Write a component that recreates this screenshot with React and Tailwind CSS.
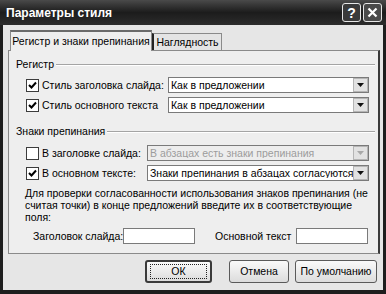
import React from 'react';

const Check = ({ checked }) => (
  <span className="w-[13px] h-[13px] border border-[#3c3c3c] bg-white flex items-center justify-center shrink-0">
    {checked && (
      <svg width="9" height="9" viewBox="0 0 9 9">
        <path d="M1 4 L3.5 6.5 L8 1.5" stroke="#000" strokeWidth="2" fill="none" />
      </svg>
    )}
  </span>
);

const Combo = ({ text, disabled, width }) => (
  <div
    className={`h-[16px] border border-[#7a7a7a] flex items-center ${width} ${
      disabled ? 'bg-[#ededed] text-[#9c9c9c]' : 'bg-white text-black'
    }`}
  >
    <span className="flex-1 pl-[2px] overflow-hidden">{text}</span>
    <span className="w-[15px] h-[14px] bg-[#e2e2e2] border border-[#b5b5b5] flex items-center justify-center">
      <svg width="7" height="4" viewBox="0 0 7 4">
        <path d="M0 0h7L3.5 4z" fill={disabled ? '#a8a8a8' : '#111'} />
      </svg>
    </span>
  </div>
);

const GroupHeader = ({ label }) => (
  <div className="flex items-center h-[13px]">
    <span>{label}</span>
    <div className="flex-1 ml-[2px] border-t border-[#a4a4a4] border-b border-b-white" />
  </div>
);

const Button = ({ children, width, focused }) => (
  <div
    className={`h-[23px] ${width} rounded-[3px] bg-gradient-to-b from-[#fafafa] to-[#dcdcdc] flex items-center justify-center ${
      focused ? 'border-2 border-[#3a3a3a]' : 'border border-[#5a5a5a]'
    }`}
  >
    {focused ? (
      <span className="border border-dotted border-[#222] w-[calc(100%-6px)] h-[15px] flex items-center justify-center">
        {children}
      </span>
    ) : (
      children
    )}
  </div>
);

const App = () => {
  return (
    <div className="w-[386px] h-[294px] bg-[#1e1e1e] flex flex-col font-['Liberation_Sans',Arial,sans-serif] text-[10.5px] text-black leading-none whitespace-nowrap">
      {/* title bar */}
      <div className="h-[25px] flex items-center justify-between pl-[6px] pr-[4px] bg-gradient-to-b from-[#4a4a4a] via-[#1c1c1c] to-[#2c2c2c]">
        <span className="text-white font-bold text-[12px]">Параметры стиля</span>
        <div className="flex gap-[2px]">
          <div className="w-[19px] h-[19px] rounded-[3px] border border-[#e6e6e6] bg-[#3a3a3a] flex items-center justify-center text-white font-bold text-[14px]">
            ?
          </div>
          <div className="w-[19px] h-[19px] rounded-[3px] border border-[#e6e6e6] bg-[#4a4a4a] flex items-center justify-center">
            <svg width="11" height="11" viewBox="0 0 11 11">
              <path d="M1.5 1.5 L9.5 9.5 M9.5 1.5 L1.5 9.5" stroke="#fff" strokeWidth="2.2" />
            </svg>
          </div>
        </div>
      </div>

      {/* body */}
      <div className="flex-1 mx-[3px] mb-[4px] bg-[#e6e6e6] flex flex-col">
        {/* tabs */}
        <div className="flex items-end h-[25px] pt-[4px] pl-[7px]">
          <div className="h-[21px] w-[142px] bg-[#eeeeee] border border-b-0 border-[#8a8a8a] border-t-2 border-t-[#6a6a6a] flex items-center justify-center relative top-[1px] z-10">
            Регистр и знаки препинания
          </div>
          <div className="h-[17px] w-[70px] bg-[#e4e4e4] border border-b-0 border-[#8a8a8a] border-l-2 border-l-[#222] flex items-center justify-center">
            Наглядность
          </div>
        </div>

        {/* panel */}
        <div className="ml-[5px] mr-[3px] h-[204px] bg-[#eeeeee] border border-[#8a8a8a] border-r-2 border-r-[#3a3a3a] pl-[7px] pr-[3px] pt-[7px] flex flex-col">
          <GroupHeader label="Регистр" />
          <div className="flex flex-col gap-[4px] mt-[6px] pl-[10px]">
            <div className="flex items-center h-[16px]">
              <Check checked />
              <span className="w-[129px] pl-[3px]">Стиль заголовка слайда:</span>
              <Combo text="Как в предложении" width="w-[201px]" />
            </div>
            <div className="flex items-center h-[16px]">
              <Check checked />
              <span className="w-[129px] pl-[3px]">Стиль основного текста</span>
              <Combo text="Как в предложении" width="w-[201px]" />
            </div>
          </div>

          <div className="mt-[12px]">
            <GroupHeader label="Знаки препинания" />
          </div>
          <div className="flex flex-col gap-[4px] mt-[7px] pl-[10px]">
            <div className="flex items-center h-[16px]">
              <Check />
              <span className="w-[108px] pl-[3px]">В заголовке слайда:</span>
              <Combo text="В абзацах есть знаки препинания" width="w-[222px]" disabled />
            </div>
            <div className="flex items-center h-[16px]">
              <Check checked />
              <span className="w-[108px] pl-[3px]">В основном тексте:</span>
              <Combo text="Знаки препинания в абзацах согласуются" width="w-[222px]" />
            </div>
          </div>

          <div className="mt-[6px] pl-[9px] leading-[12px]">
            Для проверки согласованности использования знаков препинания (не
            <br />
            считая точки) в конце предложений введите их в соответствующие
            <br />
            поля:
          </div>

          <div className="flex items-center mt-[5px] pl-[17px]">
            <span className="w-[90px]">Заголовок слайда:</span>
            <div className="w-[72px] h-[16px] bg-white border border-[#7a7a7a]" />
            <span className="ml-[20px] w-[81px]">Основной текст</span>
            <div className="w-[72px] h-[16px] bg-white border border-[#7a7a7a]" />
          </div>
        </div>

        {/* buttons */}
        <div className="flex items-center mt-[6px] pl-[142px]">
          <Button width="w-[67px]" focused>
            ОК
          </Button>
          <div className="ml-[17px]">
            <Button width="w-[60px]">Отмена</Button>
          </div>
          <div className="ml-[6px]">
            <Button width="w-[82px]">По умолчанию</Button>
          </div>
        </div>
      </div>
    </div>
  );
};

export default App;
